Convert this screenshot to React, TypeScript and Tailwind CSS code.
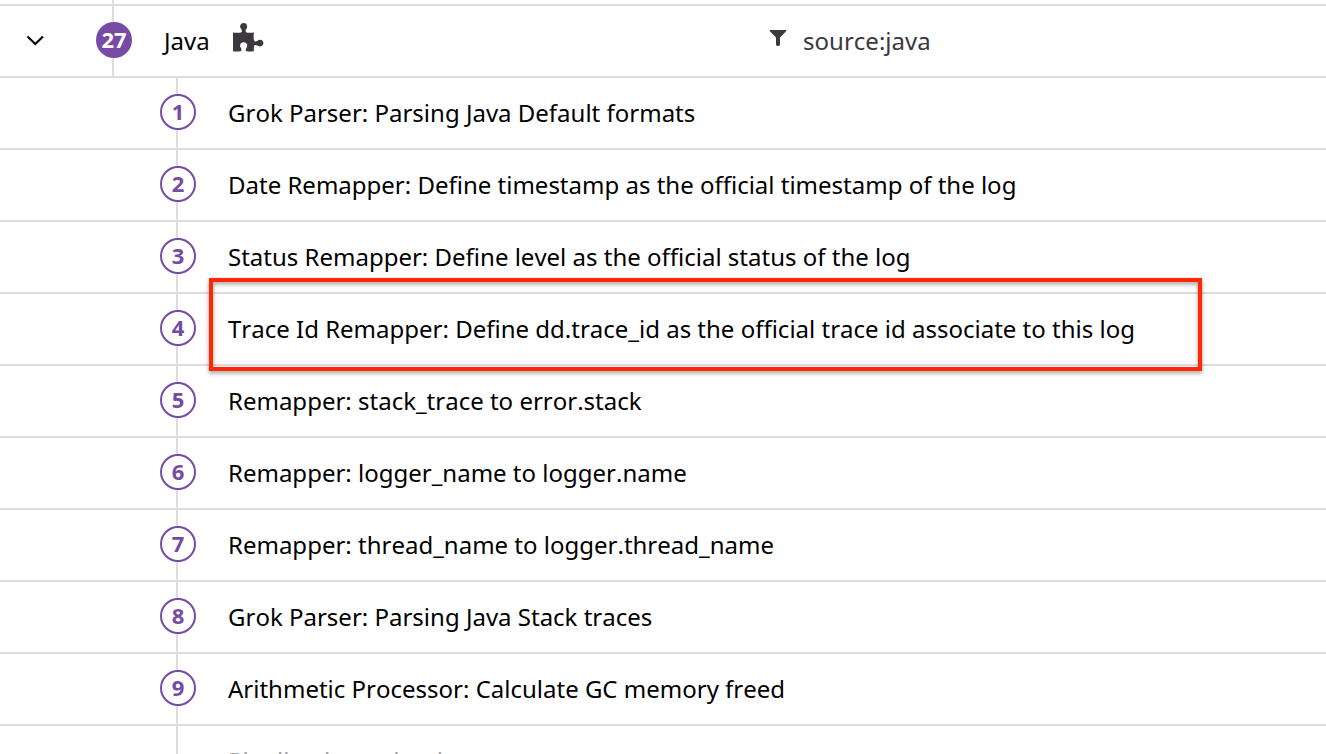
import type { ReactNode } from "react";

const processors = [
  "Grok Parser: Parsing Java Default formats",
  "Date Remapper: Define timestamp as the official timestamp of the log",
  "Status Remapper: Define level as the official status of the log",
  "Trace Id Remapper: Define dd.trace_id as the official trace id associate to this log",
  "Remapper: stack_trace to error.stack",
  "Remapper: logger_name to logger.name",
  "Remapper: thread_name to logger.thread_name",
  "Grok Parser: Parsing Java Stack traces",
  "Arithmetic Processor: Calculate GC memory freed",
];

const HIGHLIGHTED = 3;

function Rail({ children }: { children?: ReactNode }) {
  return (
    <div className="flex w-9 shrink-0 flex-col items-center self-stretch">
      <span className="mr-0.5 h-4 w-0.5 bg-[#dddce3]" />
      {children}
      <span className="mr-0.5 w-0.5 flex-1 bg-[#dddce3]" />
    </div>
  );
}

function PuzzleIcon() {
  return (
    <svg viewBox="0 0 32 30" className="h-[30px] w-8 shrink-0" fill="#3b383f" aria-hidden="true">
      <path d="M1 10.5 C3.5 10.7 7 11 9 10.5 C10.5 10 10 8.2 9 6.8 C7 4.5 8.5 1 11.7 1 C15 1 16 4.5 14.4 6.8 C13.4 8.2 13 10 14.5 10.5 C16.5 11 20 10.8 22 10.5 C21.6 13 21.4 16 22 18.2 C22.5 20 24.3 19.6 25.8 18.5 C28 17 31.4 18.2 31.4 21 C31.4 24 28 25.4 25.8 23.8 C24 22.6 22.3 22.4 22 24.5 C21.7 26 21.8 27.7 22 29 C19.8 29.6 17 29.7 14.6 29.2 C13.2 28.8 13.5 27.2 14.4 26 C16.2 23.5 15 20.2 11.7 20.2 C8.4 20.2 7.2 23.4 8.8 25.8 C9.8 27.2 9.8 28.8 8.5 29.2 C6.5 29.7 3.4 29.7 1 29.3 Z" />
    </svg>
  );
}

export default function App() {
  return (
    <main className="h-screen overflow-hidden bg-white font-['Noto_Sans',sans-serif] text-2xl leading-8 text-black [font-kerning:none]">
      <div className="flex h-1 pl-24">
        <div className="flex w-9 justify-center">
          <span className="mr-0.5 w-0.5 bg-[#dddce3]" />
        </div>
      </div>

      <header className="flex h-[72px] items-center border-t-2 border-[#dddce3]">
        <div className="flex flex-1 items-center self-stretch pl-6">
          <button type="button" aria-label="Collapse Java pipeline" className="mr-12 flex size-6 items-center justify-center">
            <svg viewBox="0 0 24 24" className="size-6" fill="none" stroke="#000" strokeWidth="2.2" aria-hidden="true">
              <path d="M3.5 7.5 L11.3 15 L19 7.5" />
            </svg>
          </button>
          <Rail>
            <span className="flex size-9 items-center justify-center rounded-full bg-[#764ba5] pb-0.5 text-[22px] font-bold leading-8 text-white">
              27
            </span>
          </Rail>
          <h1 className="ml-8">Java</h1>
          <span className="mb-2 ml-[22px]">
            <PuzzleIcon />
          </span>
        </div>
        <div className="flex w-[42%] items-center gap-4 text-[#3b383f]">
          <svg viewBox="0 0 18 18" className="mb-1.5 size-[18px]" fill="currentColor" aria-hidden="true">
            <path d="M0.6 1 H17.4 C17.5 1.9 17 2.4 16.4 3 L11 8.4 V15.5 Q11 17 9 17 Q7 17 7 15.5 V8.4 L1.6 3 C1 2.4 0.5 1.9 0.6 1 Z" />
          </svg>
          <span>source:java</span>
        </div>
      </header>

      <ol>
        {processors.map((name, index) => (
          <li key={name} className="relative flex h-[72px] items-center border-t-2 border-[#dddce3] pl-40">
            <Rail>
              <span className="flex size-9 items-center justify-center rounded-full border-2 border-[#764ba5] pb-0.5 text-[22px] font-bold leading-8 text-[#764ba5]">
                {index + 1}
              </span>
            </Rail>
            <span className="ml-8">{name}</span>
            {index === HIGHLIGHTED && (
              <span className="pointer-events-none absolute -top-4 -bottom-[7px] left-[209px] right-[124px] z-10 border-4 border-[#ff2800] drop-shadow-[0_2px_2px_rgba(0,0,0,0.4)]" />
            )}
          </li>
        ))}
      </ol>

      <footer className="flex h-[72px] items-center border-t-2 border-[#dddce3] pl-40">
        <Rail />
        <span className="ml-8 text-[#a3a3a3]">Pipeline is read-only</span>
      </footer>
    </main>
  );
}
